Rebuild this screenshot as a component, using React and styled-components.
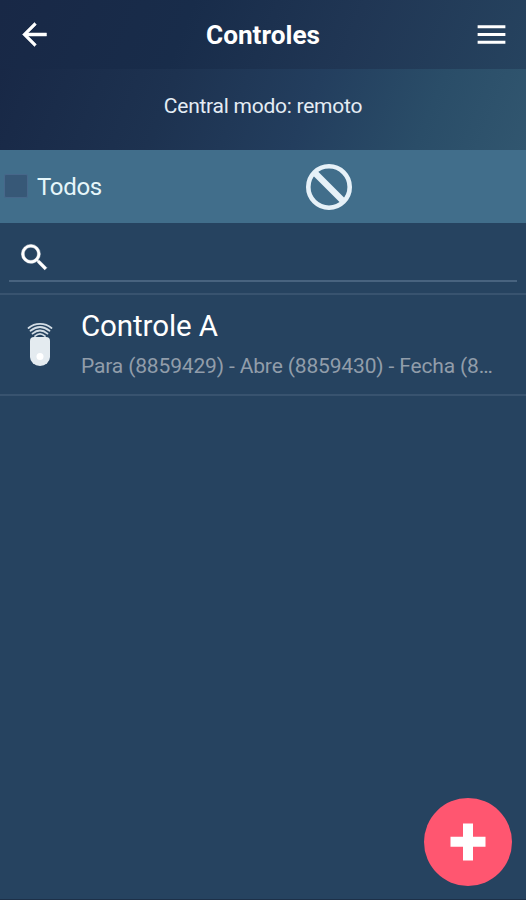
import styled, {createGlobalStyle} from "styled-components";
import {useState} from "react";

const GlobalStyle = createGlobalStyle`
    * {
        box-sizing: border-box;
    }

    body {
        margin: 0;
        background: #264360;
        font-family: Roboto, sans-serif;
    }

    button, input {
        font-family: inherit;
    }
`;

const Screen = styled.div`
    height: 900px;
    display: flex;
    flex-direction: column;
    overflow: hidden;
    background: #264360;
    border-bottom: 1px solid #1d3048;
    color: #fff;
`;

const Toolbar = styled.header`
    height: 69px;
    flex: none;
    display: flex;
    align-items: center;
    justify-content: space-between;
    padding: 0 16px 0 16px;
    background: linear-gradient(112deg, #182846 0%, #182c4a 35%, #203654 66%, #26435f 100%);
`;

const Title = styled.h1`
    margin: 0;
    font-size: 26.2px;
    line-height: 32px;
    font-weight: 700;
`;

const IconButton = styled.button`
    width: 37px;
    height: 37px;
    padding: 0;
    border: 0;
    background: none;
    color: #fff;

    svg {
        display: block;
        width: 100%;
        height: 100%;
    }
`;

const ModeBanner = styled.div`
    height: 81px;
    flex: none;
    display: flex;
    align-items: center;
    justify-content: center;
    padding-bottom: 8px;
    background: linear-gradient(112deg, #182846 0%, #1d3250 32%, #233e5e 58%, #2a4d68 80%, #31566f 100%);
    color: #e4ecf4;
    font-size: 21px;
    line-height: 26px;
    letter-spacing: -0.25px;
`;

const SelectBar = styled.div`
    height: 73px;
    flex: none;
    display: grid;
    grid-template-columns: 306px 1fr;
    align-items: center;
    background: #416e8b;
`;

const CheckLabel = styled.label`
    display: flex;
    align-items: center;
    gap: 9px;
    color: #e6f6fa;
    padding-left: 4px;
    font-size: 24px;
    line-height: 30px;
    letter-spacing: -0.3px;
`;

const Checkbox = styled.input`
    appearance: none;
    width: 24px;
    height: 24px;
    margin: 0 0 2px;
    border: 1px solid #47678a;
    border-radius: 2px;
    background: ${(props) => (props.checked ? "#ff5670" : "#375877")};
`;

const BlockButton = styled(IconButton)`
    width: 46px;
    height: 46px;
    margin-top: 1px;
    color: #e6f1f8;
`;

const SearchBox = styled.div`
    height: 59px;
    flex: none;
    display: flex;
    align-items: center;
    margin: 0 9px;
    padding: 12px 8px 0;
    border-bottom: 2px solid #48637f;

    svg {
        flex: none;
        width: 35px;
        height: 35px;
    }
`;

const SearchInput = styled.input`
    flex: 1;
    height: 36px;
    border: 0;
    outline: 0;
    background: none;
    color: #fff;
    font-size: 22px;
`;

const List = styled.ul`
    margin: 11px 0 0;
    padding: 0;
    list-style: none;
    border-top: 2px solid #38536f;
`;

const ListItem = styled.li`
    height: 101px;
    display: flex;
    padding: 12px 27px 0 27px;
    border-bottom: 2px solid #38536f;

    svg {
        flex: none;
        width: 26px;
        height: 46px;
        margin: 15px 28px 0 0;
    }
`;

const ItemText = styled.div`
    min-width: 0;
`;

const ItemName = styled.p`
    margin: 0;
    font-size: 29.5px;
    line-height: 38px;
    letter-spacing: -0.1px;
`;

const ItemCodes = styled.p`
    margin: 7px 0 0;
    overflow: hidden;
    text-overflow: ellipsis;
    white-space: nowrap;
    color: #919daa;
    font-size: 21px;
    line-height: 28px;
    letter-spacing: -0.15px;
`;

const AddButton = styled.button`
    position: absolute;
    left: 424px;
    top: 798px;
    width: 88px;
    height: 88px;
    display: flex;
    align-items: center;
    justify-content: center;
    padding: 0;
    border: 0;
    border-radius: 50%;
    background: #ff5670;

    svg {
        width: 36px;
        height: 38px;
    }
`;

const controls = [
    {
        name: "Controle A",
        codes: "Para (8859429) - Abre (8859430) - Fecha (8…",
    },
];

function RemoteIcon() {
    return (
        <svg viewBox="0 0 26 46" fill="none">
            <g stroke="#d3dde5" strokeWidth="1.8" strokeLinecap="round">
                <path d="M1.5 6C8 .6 18 .6 24.5 6"/>
                <path d="M3.5 8.8C9.5 4 16.5 4 22.5 8.8"/>
                <path d="M5.5 11.6C10.5 7.4 15.5 7.4 20.5 11.6"/>
                <path d="M8 14.2C11.5 11 14.5 11 18 14.2"/>
            </g>
            <path d="M3 19a4 4 0 0 1 4-4h12a4 4 0 0 1 4 4v16a10 9 0 0 1-20 0z" fill="#e4ebf0"/>
            <circle cx="13" cy="34.5" r="3.5" fill="#fff"/>
        </svg>
    );
}

export default function Controls() {

    const [allSelected, setAllSelected] = useState(false);
    const [search, setSearch] = useState('');

    const filtered = controls.filter((control) => control.name.toLowerCase().includes(search.toLowerCase()));

    return (
        <>
            <GlobalStyle/>
            <Screen>
                <Toolbar>
                    <IconButton>
                        <svg viewBox="0 0 24 24" fill="currentColor" stroke="currentColor" strokeWidth="0.3">
                            <path d="M19.8 11H7.83l5.4-5.4L12 4.2 4.2 12l7.8 7.8 1.23-1.4L7.83 13h11.97v-2z"/>
                        </svg>
                    </IconButton>
                    <Title>Controles</Title>
                    <IconButton>
                        <svg viewBox="0 0 24 24" fill="currentColor">
                            <path d="M3 18h18v-2H3v2zm0-5h18v-2H3v2zm0-7v2h18V6H3z"/>
                        </svg>
                    </IconButton>
                </Toolbar>

                <ModeBanner>Central modo: remoto</ModeBanner>

                <SelectBar>
                    <CheckLabel>
                        <Checkbox
                            type="checkbox"
                            checked={allSelected}
                            onChange={(e) => setAllSelected(e.target.checked)}
                        />
                        Todos
                    </CheckLabel>
                    <BlockButton>
                        <svg viewBox="0 0 46 46" fill="none" stroke="currentColor">
                            <circle cx="23" cy="23" r="20.7" strokeWidth="4.6"/>
                            <path d="M8.5 8.5l29 29" strokeWidth="6.4"/>
                        </svg>
                    </BlockButton>
                </SelectBar>

                <SearchBox>
                    <svg viewBox="0 0 24 24" fill="#fff" stroke="#fff" strokeWidth="0.3">
                        <path d="M15.5 14h-.79l-.28-.27A6.471 6.471 0 0 0 16 9.5 6.5 6.5 0 1 0 9.5 16c1.61 0 3.09-.59 4.23-1.57l.27.28v.79l5 4.99L20.49 19l-4.99-5zm-6 0C7.01 14 5 11.99 5 9.5S7.01 5 9.5 5 14 7.01 14 9.5 11.99 14 9.5 14z"/>
                    </svg>
                    <SearchInput value={search} onChange={(e) => setSearch(e.target.value)}/>
                </SearchBox>

                <List>
                    {filtered.map((control) => (
                        <ListItem key={control.name}>
                            <RemoteIcon/>
                            <ItemText>
                                <ItemName>{control.name}</ItemName>
                                <ItemCodes>{control.codes}</ItemCodes>
                            </ItemText>
                        </ListItem>
                    ))}
                </List>

                <AddButton>
                    <svg viewBox="0 0 36 38" fill="#fff">
                        <path d="M13 .5h10v13.3h12.5v10H23v13.7H13V23.8H.5v-10H13z"/>
                    </svg>
                </AddButton>
            </Screen>
        </>
    );
}
